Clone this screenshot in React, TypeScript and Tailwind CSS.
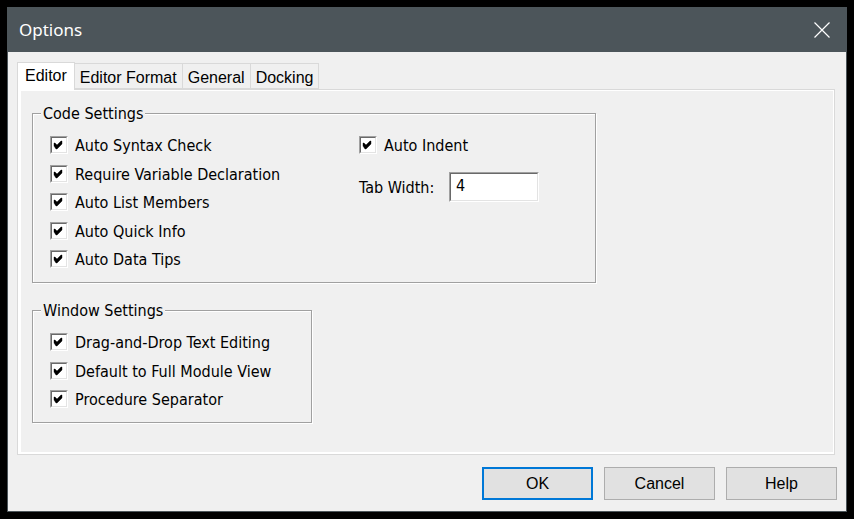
import { useState, type ReactNode } from "react";

const TABS = ["Editor", "Editor Format", "General", "Docking"];

function CheckOption({ label }: { label: string }) {
  return (
    <label className="flex h-[18px] items-center gap-[7px] whitespace-nowrap">
      <span className="grid size-[18px] shrink-0 border border-t-[#a0a0a0] border-r-white border-b-white border-l-[#a0a0a0]">
        <input
          type="checkbox"
          defaultChecked
          className="peer col-start-1 row-start-1 size-4 appearance-none border border-t-[#696969] border-r-[#e3e3e3] border-b-[#e3e3e3] border-l-[#696969] bg-white"
        />
        <svg
          viewBox="0 0 16 16"
          className="pointer-events-none invisible col-start-1 row-start-1 size-4 peer-checked:visible"
          aria-hidden="true"
        >
          <path d="M3 6h1l2 2 4-4h1v3l-5 5h-1l-2-3z" fill="#000" stroke="#000" strokeWidth=".4" />
        </svg>
      </span>
      <span className="pt-[2px]">{label}</span>
    </label>
  );
}

function Group({ title, className, children }: { title: string; className: string; children: ReactNode }) {
  return (
    <fieldset
      className={`w-full border border-[#a0a0a0] pl-[17px] shadow-[1px_1px_0_#fff,inset_1px_1px_0_#fff] ${className}`}
    >
      <legend className="-ml-[9px] h-5 bg-[#f0f0f0] px-[2px] leading-[22px]">{title}</legend>
      {children}
    </fieldset>
  );
}

export default function App() {
  const [tab, setTab] = useState("Editor");
  const button = "h-[33px] w-[111px] bg-[#e1e1e1]";

  return (
    <div className="flex min-h-screen bg-black p-[7px] text-black">
      <div
        role="dialog"
        aria-label="Options"
        className="flex flex-1 flex-col border border-[#4c555a] bg-[#f0f0f0] font-['DejaVu_Sans_Condensed','DejaVu_Sans',sans-serif] text-base"
      >
        <header className="flex h-11 items-center justify-between bg-[#4c555a] pr-4 pl-[11px] text-white">
          <h1 className="font-['Noto_Sans',sans-serif] text-[17px]">Options</h1>
          <button type="button" aria-label="Close" className="size-4">
            <svg viewBox="0 0 16 16" className="size-4" aria-hidden="true">
              <path d="M.5.5l15 15M15.5.5l-15 15" stroke="#fff" strokeWidth="1.2" fill="none" />
            </svg>
          </button>
        </header>

        <main className="flex flex-1 flex-col pt-[10px] pr-[11px] pl-[9px]">
          <div
            role="tablist"
            className="z-10 -mb-px flex h-7 items-end font-['Liberation_Sans',Arial,sans-serif]"
          >
            {TABS.map((name) => (
              <button
                key={name}
                type="button"
                role="tab"
                aria-selected={tab === name}
                onClick={() => setTab(name)}
                className={
                  tab === name
                    ? "h-7 border border-b-0 border-[#d9d9d9] bg-white px-[7px] pb-[2px]"
                    : "mb-px h-[26px] border border-l-0 border-[#d9d9d9] px-[5px] pt-[2px]"
                }
              >
                {name}
              </button>
            ))}
          </div>

          <div
            role="tabpanel"
            className="flex-1 border border-[#d9d9d9] bg-white pt-px pr-px pb-[2px] pl-[3px]"
          >
            <div className="flex h-full flex-col gap-[17px] bg-[#f0f0f0] pt-3 pr-4 pb-7 pl-[11px]">
              <Group title="Code Settings" className="max-w-[564px] pb-[14px]">
                <div className="mt-[13px] grid grid-cols-[309px_auto] justify-start">
                  <div className="flex h-[132px] flex-col justify-between">
                    <CheckOption label="Auto Syntax Check" />
                    <CheckOption label="Require Variable Declaration" />
                    <CheckOption label="Auto List Members" />
                    <CheckOption label="Auto Quick Info" />
                    <CheckOption label="Auto Data Tips" />
                  </div>
                  <div className="flex flex-col gap-[18px]">
                    <CheckOption label="Auto Indent" />
                    <div className="flex items-center">
                      <label htmlFor="tab-width" className="w-[90px] pt-[2px]">
                        Tab Width:
                      </label>
                      <span className="flex border border-t-[#a0a0a0] border-r-white border-b-white border-l-[#a0a0a0]">
                        <input
                          id="tab-width"
                          type="text"
                          defaultValue="4"
                          className="h-7 w-[88px] border border-t-[#696969] border-r-[#e3e3e3] border-b-[#e3e3e3] border-l-[#696969] bg-white pb-1 pl-[5px] outline-none"
                        />
                      </span>
                    </div>
                  </div>
                </div>
              </Group>

              <Group title="Window Settings" className="max-w-[280px] pb-[14px]">
                <div className="mt-[13px] flex h-[75px] flex-col justify-between">
                  <CheckOption label="Drag-and-Drop Text Editing" />
                  <CheckOption label="Default to Full Module View" />
                  <CheckOption label="Procedure Separator" />
                </div>
              </Group>
            </div>
          </div>
        </main>

        <footer className="flex justify-end gap-[11px] pt-3 pr-[9px] pb-[11px] font-['Liberation_Sans',Arial,sans-serif]">
          <button type="button" className={`${button} border-2 border-[#0078d7]`}>
            OK
          </button>
          <button type="button" className={`${button} border border-[#adadad]`}>
            Cancel
          </button>
          <button type="button" className={`${button} border border-[#adadad]`}>
            Help
          </button>
        </footer>
      </div>
    </div>
  );
}
